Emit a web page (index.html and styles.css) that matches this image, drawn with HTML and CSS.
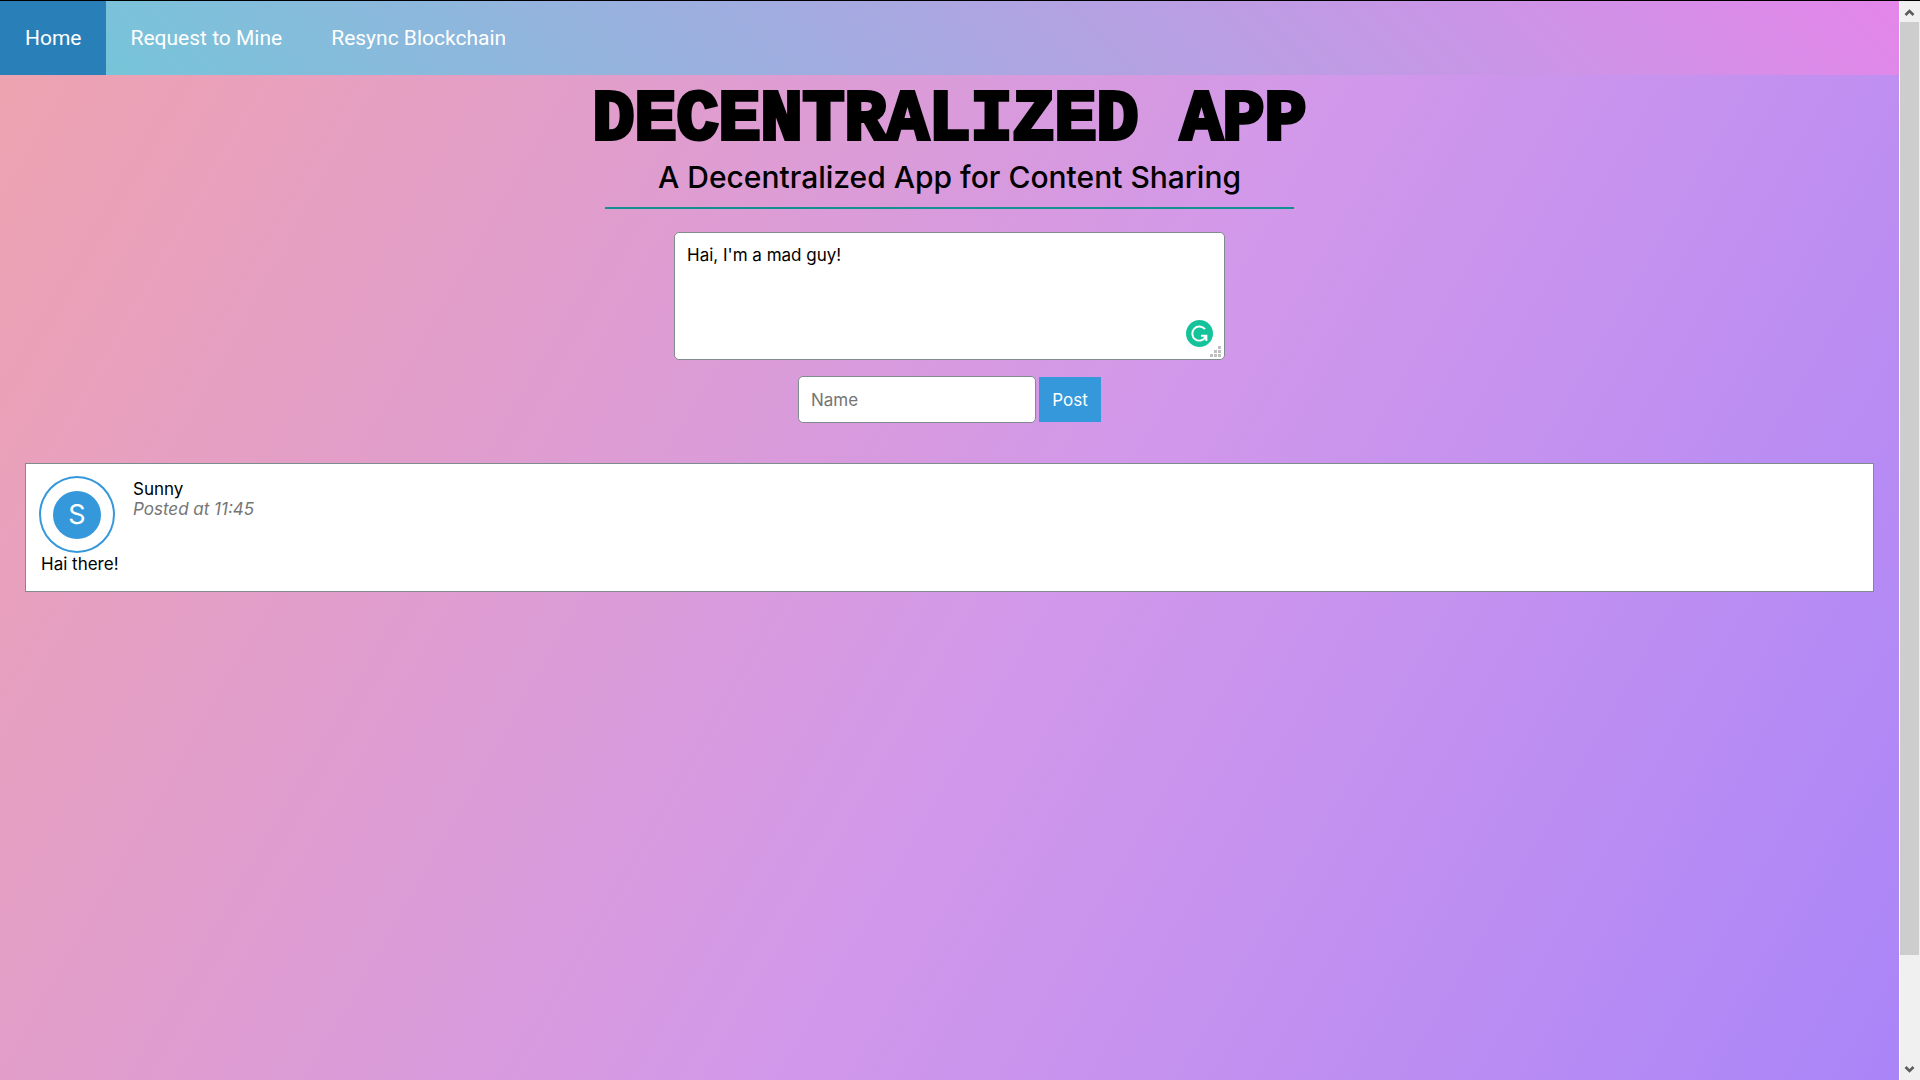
FILE: index.html
```html
<!DOCTYPE html>
<html lang="en">
<head>
<meta charset="utf-8">
<meta name="viewport" content="width=device-width, initial-scale=1">
<title>Decentralized App</title>
<link rel="stylesheet" href="styles.css">
</head>
<body>
<div class="page">
  <nav class="nav">
    <a class="nav-link active" href="#home">Home</a>
    <a class="nav-link" href="#mine">Request to Mine</a>
    <a class="nav-link" href="#resync">Resync Blockchain</a>
  </nav>
  <main class="main">
    <header class="intro">
      <h1 class="title">DECENTRALIZED APP</h1>
      <p class="subtitle">A Decentralized App for Content Sharing</p>
      <hr class="rule">
    </header>
    <form class="composer">
      <div class="content-field">
        <textarea class="field content" name="content" aria-label="Content">Hai, I'm a mad guy!</textarea>
        <svg class="checker" viewBox="0 0 27 27" aria-hidden="true">
          <circle cx="13.5" cy="13.5" r="13.5" fill="#15c39a"/>
          <path d="M19 9.2A7.1 7.1 0 1 0 19.6 17M15 15.7h5.4v5.3" fill="none" stroke="#fff" stroke-width="1.9"/>
          <path d="M20.8 15.6v5.2l-3.5-3.3z" fill="#fff"/>
        </svg>
        <svg class="grip" viewBox="0 0 11 11" aria-hidden="true">
          <path d="M8 0h3v3H8zM4 4h3v3H4zM8 4h3v3H8zM0 8h3v3H0zM4 8h3v3H4zM8 8h3v3H8z" fill="#bfbfbf"/>
        </svg>
      </div>
      <div class="author-row">
        <input class="field author" type="text" name="author" placeholder="Name" aria-label="Name">
        <button class="post-button" type="submit">Post</button>
      </div>
    </form>
    <article class="post">
      <div class="post-head">
        <div class="avatar"><span class="initial">S</span></div>
        <div class="post-meta">
          <div>Sunny</div>
          <div class="posted">Posted at 11:45</div>
        </div>
      </div>
      <p class="post-text">Hai there!</p>
    </article>
  </main>
</div>
<div class="scrollbar" aria-hidden="true">
  <svg class="arrow" viewBox="0 0 19 21"><path d="M5.5 14l4-4 4 4" fill="none" stroke="#5c5c5c" stroke-width="2.6"/></svg>
  <div class="track"><div class="thumb"></div></div>
  <svg class="arrow" viewBox="0 0 19 21"><path d="M5.5 8l4 4 4-4" fill="none" stroke="#5c5c5c" stroke-width="2.6"/></svg>
</div>
</body>
</html>
```

FILE: styles.css
```css
* {
  box-sizing: border-box;
}

body {
  display: flex;
  min-height: 100vh;
  margin: 0;
  border-top: 1px solid #000;
  font: 17px/20px Inter, sans-serif;
  color: #000;
}

.page {
  flex: 1;
  min-width: 0;
  background: linear-gradient(120deg, #efa3ae 0%, #d298ea 55%, #aa85f8 100%);
}

.nav {
  display: flex;
  background: linear-gradient(45deg, #70c8d8, #e486ea);
}

.nav-link {
  padding: 25px 24px 25px 25px;
  font-family: Roboto, sans-serif;
  font-size: 21px;
  line-height: 24px;
  color: #fff;
  text-decoration: none;
}

.nav-link.active {
  background: #2980b9;
}

.main {
  padding: 18px 25px;
}

.intro {
  text-align: center;
}

.title {
  margin: 0;
  font: bold 70px/56px "Liberation Mono", monospace;
  -webkit-text-stroke: 4px #000;
}

.subtitle {
  margin: 10px 0 12px;
  font-size: 30px;
  font-weight: 500;
  line-height: 36px;
}

.rule {
  width: 689px;
  max-width: 100%;
  height: 2px;
  margin: 0 auto 23px;
  border: 0;
  background: #149090;
}

.composer {
  display: flex;
  flex-direction: column;
  align-items: center;
  gap: 16px;
}

.content-field {
  position: relative;
  width: 551px;
  max-width: 100%;
}

.field {
  padding: 12px;
  border: 1px solid #7f8c8d;
  border-radius: 5px;
  background: #fff;
  font: inherit;
  color: #000;
}

.field::placeholder {
  color: #757575;
  opacity: 1;
}

.content {
  display: block;
  width: 100%;
  height: 128px;
  resize: none;
}

.checker {
  position: absolute;
  right: 12px;
  bottom: 13px;
  width: 27px;
  height: 27px;
}

.grip {
  position: absolute;
  right: 4px;
  bottom: 3px;
  width: 11px;
  height: 11px;
}

.author-row {
  display: flex;
  align-items: center;
  gap: 3px;
}

.author {
  width: 238px;
  height: 47px;
}

.post-button {
  width: 62px;
  height: 45px;
  padding: 0;
  border: 0;
  background: #3498db;
  font: inherit;
  color: #fff;
}

.post {
  margin-top: 40px;
  padding: 12px 13px 16px;
  border: 1px solid #7f8c8d;
  background: #fff;
}

.post-head {
  display: flex;
  gap: 18px;
}

.avatar {
  display: grid;
  place-items: center;
  width: 76px;
  height: 77px;
  border: 2px solid #3498db;
  border-radius: 50%;
}

.initial {
  width: 48px;
  height: 48px;
  border-radius: 50%;
  background: #3498db;
  font-size: 27px;
  line-height: 48px;
  text-align: center;
  color: #fff;
}

.post-meta {
  padding-top: 3px;
}

.posted {
  font-style: italic;
  color: #757575;
}

.post-text {
  margin: 0;
  padding: 1px 2px;
}

.scrollbar {
  display: flex;
  flex-direction: column;
  width: 21px;
  border-left: 1px solid #fff;
  background: #f0f0f0;
}

.arrow {
  width: 19px;
  height: 21px;
}

.track {
  flex: 1;
}

.thumb {
  width: 19px;
  height: 90%;
  background: #cdcdcd;
}
```
